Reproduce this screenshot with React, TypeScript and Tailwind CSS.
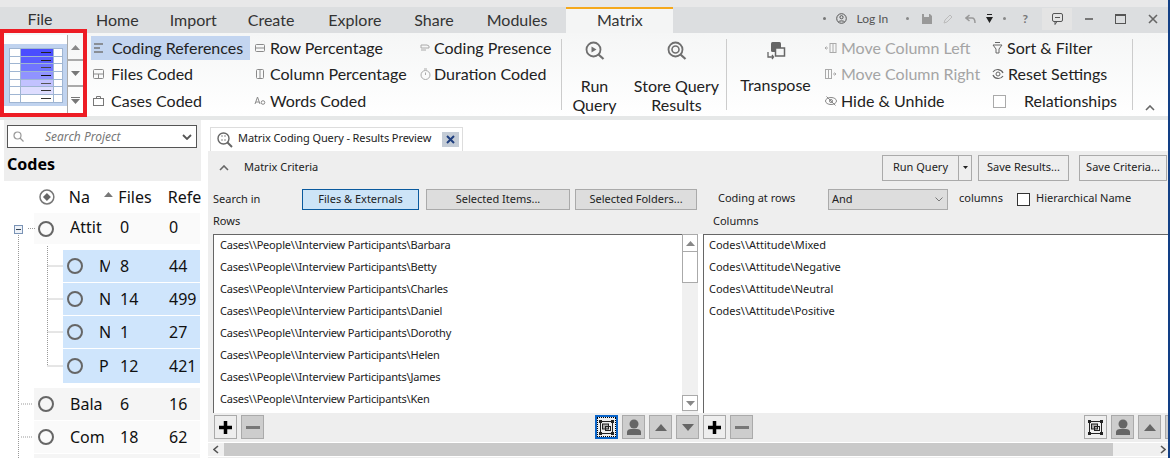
import React from "react";

const S = ({ w = 14, h = 14, children, className = "" }: { w?: number; h?: number; children: React.ReactNode; className?: string }) => (
  <svg width={w} height={h} viewBox={`0 0 ${w} ${h}`} fill="none" className={"shrink-0 " + className}>{children}</svg>
);

const c = "#8a8a8a";
const icons: Record<string, React.ReactNode> = {
  refs: <S><path d="M2 3h9M2 7h6M2 11h9" stroke="#777" strokeWidth="1.6" /></S>,
  files: <S><rect x="1.5" y="2.5" width="10" height="9" rx="1" stroke={c} /><path d="M1.5 7h10M6.5 7v4.5" stroke={c} /></S>,
  cases: <S><rect x="1.5" y="4.5" width="10" height="7" stroke="#777" /><path d="M4.5 4.5V2.5h4v2" stroke="#777" /></S>,
  row: <S><rect x="1.5" y="3.5" width="9" height="7" rx="1" stroke={c} /><path d="M1.5 7h9" stroke={c} /></S>,
  col: <S><rect x="2.5" y="2.5" width="7" height="9" rx="1" stroke={c} /><path d="M6 2.5v9" stroke={c} /></S>,
  words: <S><path d="M1 10l2.5-7L6 10M2 8h3" stroke={c} /><circle cx="9" cy="8.5" r="1.8" stroke={c} /></S>,
  pres: <S><path d="M2 4h6l2 1v2H2zM2 9h5" stroke="#aaa" /></S>,
  dur: <S><circle cx="6.5" cy="8" r="4.5" stroke="#aaa" /><path d="M5 2h3M6.5 8V5.5" stroke="#aaa" /></S>,
  left: <S><path d="M0 7h3M1.500 5.500L0 7l1.500 1.500" stroke="#aaa" /><rect x="5" y="2.5" width="6" height="9" stroke="#aaa" /><path d="M8 2.500v9" stroke="#aaa" /></S>,
  right: <S><rect x=".5" y="2.5" width="6" height="9" stroke="#aaa" /><path d="M3.500 2.500v9M8 7h3M9.500 5.500L11 7 9.500 8.500" stroke="#aaa" /></S>,
  hide: <S><ellipse cx="6" cy="7" rx="5.500" ry="3.500" stroke="#888" /><circle cx="6" cy="7" r="1.500" stroke="#888" /><path d="M1.500 2.500l9 9" stroke="#888" /></S>,
  filter: <S><path d="M2 4h9L8 8v4H5V8z" stroke="#666" /><path d="M4 1.500h5" stroke="#666" /></S>,
  reset: <S><path d="M2 5a5.500 5 0 0 1 10 1M12 9a5.500 5 0 0 1-10-1" stroke="#666" strokeWidth="1.200" /><circle cx="7" cy="7" r="2" stroke="#666" /></S>,
};

const Item = ({ icon, label, gap = "w-[20px]", cls = "text-[#222]", bg = "" }: { icon: string; label: string; gap?: string; cls?: string; bg?: string }) => (
  <div className={`flex h-[26px] items-center whitespace-nowrap ${cls}`}>
    <div className={`flex h-[24px] w-full items-center ${bg}`}>
      <span className={`${gap} flex justify-start pl-[1px]`}>{icons[icon]}</span>
      <span>{label}</span>
    </div>
  </div>
);

const GalleryRow = ({ color, line }: { color: string; line: string }) => (
  <div className="flex h-[7.700px] border-b border-[#9fb5d2]">
    <div className="w-[11px] border-r border-[#9fb5d2] bg-white" />
    <div className={`w-[32px] flex items-center justify-end pr-[2px] ${color}`}>
      <div className={`h-[1px] w-[10px] ${line}`} />
    </div>
    <div className="flex-1 border-l border-[#9fb5d2] bg-white" />
  </div>
);

const Lens = ({ inner }: { inner: React.ReactNode }) => (
  <svg width="20" height="20" viewBox="0 0 20 20" fill="none" className="block">
    <circle cx="8.500" cy="8.500" r="7" stroke="#6f6f6f" strokeWidth="1.800" />
    <path d="M13.500 13.500l5 4.500" stroke="#6f6f6f" strokeWidth="2.200" />
    {inner}
  </svg>
);

const Circle = () => <div className="h-[16px] w-[16px] shrink-0 rounded-full border-2 border-[#666]" />;

const ParentRow = ({ name, files, refs, bg }: { name: string; files: string; refs: string; bg: string }) => (
  <div className={`ml-[30px] flex h-[32px] w-[166px] items-center ${bg}`}>
    <div className="ml-[4px]"><Circle /></div>
    <div className="ml-[16px] w-[50px] overflow-hidden">{name}</div>
    <div className="w-[49px]">{files}</div>
    <div>{refs}</div>
  </div>
);

const ChildRow = ({ name, files, refs, h = "h-[32px]" }: { name: string; files: string; refs: string; h?: string }) => (
  <div className={`ml-[59px] flex w-[137px] items-center bg-[#cfe5fc] ${h}`}>
    <div className="ml-[4px]"><Circle /></div>
    <div className="ml-[16px] mr-[10px] w-[11px] overflow-hidden">{name}</div>
    <div className="w-[49px]">{files}</div>
    <div>{refs}</div>
  </div>
);

const TB = ({ children, light = false, focus = false }: { children: React.ReactNode; light?: boolean; focus?: boolean }) => (
  <div className={`flex h-[24px] w-[23px] shrink-0 items-center justify-center border ${focus ? "border-[#0a64c8] border-2 outline-1 outline-dotted outline-offset-[-3px] outline-black" : "border-[#aaa]"} ${light ? "bg-[#eee]" : "bg-[#cdcdcd]"}`}>
    {children}
  </div>
);
const Plus = () => <svg width="15" height="15" viewBox="0 0 15 15"><path d="M7.500 1v13M1 7.500h13" stroke="#000" strokeWidth="3.500" /></svg>;
const Minus = () => <div className="h-[3px] w-[14px] bg-[#777]" />;
const Person = () => <svg width="16" height="17" viewBox="0 0 16 17" fill="#666"><circle cx="8" cy="5" r="4.500" /><path d="M1 16v-3c0-2 2-3 4-3h6c2 0 4 1 4 3v3z" /></svg>;
const Tri = ({ down = false }: { down?: boolean }) => <svg width="12" height="7" viewBox="0 0 12 7" fill="#666"><path d={down ? "M0 0h12L6 7z" : "M6 0l6 7H0z"} /></svg>;
const Shape = () => (
  <svg width="15" height="15" viewBox="0 0 15 15" fill="none" stroke="#222">
    <rect x="1.500" y="1.500" width="12" height="12" />
    <rect x="0" y="0" width="3" height="3" fill="#222" stroke="none" />
    <rect x="12" y="0" width="3" height="3" fill="#222" stroke="none" />
    <rect x="0" y="12" width="3" height="3" fill="#222" stroke="none" />
    <rect x="12" y="12" width="3" height="3" fill="#222" stroke="none" />
    <rect x="3.500" y="4" width="6" height="5" fill="#aaa" />
    <rect x="6.500" y="6.500" width="5" height="4" />
  </svg>
);

const rows = ["Barbara", "Betty", "Charles", "Daniel", "Dorothy", "Helen", "James", "Ken"];
const cols = ["Mixed", "Negative", "Neutral", "Positive"];
const Btn = ({ children, cls }: { children: React.ReactNode; cls: string }) => (
  <div className={`flex items-center justify-center border ${cls}`}>{children}</div>
);

export default function App() {
  return (
    <div className="relative flex h-[458px] w-[1170px] flex-col overflow-hidden border-r-2 border-[#123f85] bg-white font-['Noto_Sans',sans-serif]">
      {/* Title + tabs */}
      <div className="flex h-[33px] shrink-0 border-t-[7px] border-[#e8e8e9] bg-[#dcdee0] font-['Lato',sans-serif] text-[16px] text-[#333]">
        <div className="flex w-[80px] items-center justify-center pb-[3px]">File</div>
        {[["Home", "ml-[16px]"], ["Import", "ml-[31px]"], ["Create", "ml-[31px]"], ["Explore", "ml-[34px]"], ["Share", "ml-[33px]"], ["Modules", "ml-[33px]"]].map(([t, m]) => (
          <div key={t} className={`flex items-center ${m}`}>{t}</div>
        ))}
        <div className="ml-[19px] flex w-[107px] items-center justify-center border-t-2 border-[#f5a81c] bg-[#f4f5f5] pb-[2px]">Matrix</div>
        <div className="ml-[150px] flex items-center whitespace-nowrap pb-[3px] text-[12px] text-[#555]">
          <span className="h-[3px] w-[3px] rounded-full bg-[#777]" />
          <svg className="ml-[10px]" width="11" height="11" viewBox="0 0 11 11" fill="none" stroke="#555"><circle cx="5.500" cy="5.500" r="4.800" /><circle cx="5.500" cy="4.200" r="1.600" /><path d="M2.500 9c.5-1.500 5.500-1.500 6 0" /></svg>
          <span className="ml-[9px] w-[33px]">Log In</span>
          <span className="ml-[17px] h-[3px] w-[3px] rounded-full bg-[#888]" />
          <svg className="ml-[13px]" width="10" height="10" viewBox="0 0 10 10" fill="#999"><path d="M0 0h8l2 2v8H0z" /><path d="M2 0h5v3H2z" fill="#dcdee0" /></svg>
          <svg className="ml-[11px]" width="10" height="10" viewBox="0 0 10 10" fill="none" stroke="#bbb"><path d="M1 9l1-3 5-5 2 2-5 5z" /></svg>
          <svg className="ml-[12px]" width="11" height="10" viewBox="0 0 11 10" fill="none" stroke="#999" strokeWidth="1.500"><path d="M4.500 1L1 4l3.500 3M1 4h6c2 0 3 2 3 5" /></svg>
          <svg className="ml-[10px]" width="7" height="9" viewBox="0 0 7 9" fill="#222"><path d="M1 0h5v1H1zM0 3h7L3.500 9z" /></svg>
          <span className="ml-[10px] h-[3px] w-[3px] rounded-full bg-[#888]" />
          <span className="ml-[16px] w-[7px] font-bold text-[#777]">?</span>
          <div className="ml-[13px] flex h-[22px] w-[30px] items-center justify-center bg-[#e4e4e4]">
            <svg width="11" height="12" viewBox="0 0 11 12" fill="none" stroke="#555"><rect x=".5" y=".5" width="10" height="8" rx="1.500" /><path d="M3 8.500v3l2-3M3 4.500h5" /></svg>
          </div>
          <span className="ml-[13px] h-[2px] w-[8px] bg-[#777]" />
          <span className="ml-[22px] h-[10px] w-[11px] border border-t-2 border-[#555]" />
          <svg className="ml-[22px]" width="10" height="10" viewBox="0 0 10 10" stroke="#666" strokeWidth="1.600"><path d="M1 1l8 8M9 1L1 9" /></svg>
        </div>
      </div>

      {/* Ribbon */}
      <div className="flex h-[83px] shrink-0 bg-gradient-to-b from-[#f5f6f6] to-white pt-[2px] font-['Lato',sans-serif] text-[16px]">
        <div className="ml-[4px] flex h-[78px] w-[79px] shrink-0">
          <div className="h-[78px] w-[63px] bg-white pt-[9px]">
            <div className="h-[62px] w-[63px] bg-[#c0d3ef] pl-[5px] pr-[4px] pt-[4px]">
              <div className="border-x border-t border-[#9fb5d2]">
                <GalleryRow color="bg-[#4a4dff]" line="bg-[#222]" />
                <GalleryRow color="bg-[#5a5dff]" line="bg-[#222]" />
                <GalleryRow color="bg-[#7075ff]" line="bg-[#444]" />
                <GalleryRow color="bg-[#9093ff]" line="bg-[#111]" />
                <GalleryRow color="bg-[#c2c2ff]" line="bg-[#555]" />
                <GalleryRow color="bg-[#deddff]" line="bg-[#333]" />
                <GalleryRow color="bg-white" line="bg-[#333]" />
              </div>
            </div>
          </div>
          <div className="flex w-[16px] flex-col border-l border-[#aaa]">
            <div className="flex h-[26px] items-center justify-center border-b-2 border-[#aaa]"><svg width="9" height="5" viewBox="0 0 9 5" fill="#888"><path d="M4.500 0L9 5H0z" /></svg></div>
            <div className="flex h-[26px] items-center justify-center border-b-2 border-[#aaa]"><svg width="9" height="5" viewBox="0 0 9 5" fill="#777"><path d="M0 0h9L4.500 5z" /></svg></div>
            <div className="flex flex-1 flex-col items-center justify-center gap-[1px]"><div className="h-[1px] w-[9px] bg-[#777]" /><svg width="9" height="5" viewBox="0 0 9 5" fill="#777"><path d="M0 0h9L4.500 5z" /></svg></div>
          </div>
        </div>

        <div className="ml-[8px] w-[159px] shrink-0">
          <Item icon="refs" label="Coding References" gap="w-[21px]" bg="bg-[#c3d5f0]" />
          <Item icon="files" label="Files Coded" />
          <div className="pt-[1px]"><Item icon="cases" label="Cases Coded" /></div>
        </div>
        <div className="ml-[3px] w-[165px] shrink-0">
          <Item icon="row" label="Row Percentage" gap="w-[17px]" />
          <Item icon="col" label="Column Percentage" gap="w-[17px]" />
          <div className="pt-[1px]"><Item icon="words" label="Words Coded" gap="w-[17px]" /></div>
        </div>
        <div className="w-[143px] shrink-0">
          <Item icon="pres" label="Coding Presence" gap="w-[16px]" />
          <Item icon="dur" label="Duration Coded" gap="w-[16px]" />
        </div>
        <div className="mt-[4px] h-[71px] w-[1px] shrink-0 bg-[#ccc]" />
        <div className="flex w-[65px] shrink-0 flex-col items-center text-[#222]">
          <div className="mt-[6px] ml-[1px] h-[26px]"><Lens inner={<path d="M6.500 5.500l5 3-5 3z" fill="#6f6f6f" />} /></div>
          <div className="mt-[9px] text-center leading-[19px]">Run<br />Query</div>
        </div>
        <div className="flex w-[99px] shrink-0 flex-col items-center text-[#222]">
          <div className="mt-[6px] h-[26px]"><Lens inner={<circle cx="8.500" cy="8.500" r="3.500" stroke="#6f6f6f" strokeWidth="1.600" />} /></div>
          <div className="mt-[9px] whitespace-nowrap text-center leading-[19px]">Store Query<br />Results</div>
        </div>
        <div className="mt-[4px] h-[71px] w-[1px] shrink-0 bg-[#ccc]" />
        <div className="flex w-[97px] shrink-0 flex-col items-center text-[#222]">
          <div className="mt-[6px] h-[26px]">
            <svg width="20" height="20" viewBox="0 0 20 20" fill="none" className="block"><rect x="5" y="1" width="10" height="10" rx="1.500" fill="#666" /><rect x="9.500" y="7" width="9" height="8" fill="#f5f6f6" stroke="#666" strokeWidth="1.500" /><path d="M2 11v5h5M6 14l1.500 2L6 18" stroke="#666" strokeWidth="1.300" /></svg>
          </div>
          <div className="mt-[8px] leading-[19px]">Transpose</div>
        </div>
        <div className="w-[166px] shrink-0">
          <Item icon="left" label="Move Column Left" gap="w-[17px]" cls="text-[#a5a5a5]" />
          <Item icon="right" label="Move Column Right" gap="w-[17px]" cls="text-[#a5a5a5]" />
          <div className="pt-[1px]"><Item icon="hide" label="Hide &amp; Unhide" gap="w-[17px]" /></div>
        </div>
        <div className="w-[142px] shrink-0">
          <Item icon="filter" label="Sort &amp; Filter" gap="w-[17px]" />
          <Item icon="reset" label="Reset Settings" gap="w-[18px]" />
          <div className="flex h-[27px] items-center pt-[1px] text-[#222]">
            <div className="ml-[3px] h-[13px] w-[13px] border border-[#aaa] bg-white" />
            <span className="ml-[18px]">Relationships</span>
          </div>
        </div>
        <div className="mt-[4px] h-[71px] w-[1px] shrink-0 bg-[#ccc]" />
        <div className="ml-[12px] flex h-[77px] items-end pb-[1px]">
          <svg width="10" height="6" viewBox="0 0 10 6" fill="none" stroke="#666" strokeWidth="1.600"><path d="M1 5l4-4 4 4" /></svg>
        </div>
      </div>
      <div className="h-[4px] shrink-0 bg-[#e6e8e8]" />

      {/* Body */}
      <div className="flex min-h-0 flex-1">
        {/* Navigation */}
        <div className="ml-[4px] w-[197px] shrink-0 overflow-hidden text-[16px] text-[#111]">
          <div className="h-[61px] bg-[#eee] pl-[3px] pt-[5px]">
            <div className="flex h-[23px] w-[190px] items-center border border-[#555] bg-white pl-[5px] pr-[4px]">
              <svg width="11" height="11" viewBox="0 0 11 11" fill="none" stroke="#999" strokeWidth="1.200"><circle cx="4.500" cy="4.500" r="3.500" /><path d="M7 7l3.500 3.500" /></svg>
              <span className="ml-[21px] flex-1 text-[12px] italic text-[#777]">Search Project</span>
              <svg width="10" height="6" viewBox="0 0 10 6" fill="none" stroke="#555" strokeWidth="1.800"><path d="M1 1l4 4 4-4" /></svg>
            </div>
            <div className="mt-[5px] pl-[0px] text-[16px] font-bold leading-[22px] text-black">Codes</div>
          </div>
          <div className="relative">
            <svg className="absolute left-0 top-0" width="60" height="280" viewBox="0 0 60 280" fill="none" stroke="#999" strokeDasharray="1 1">
              <path d="M14.500 52V280M24 47.500h7M43.500 65V185H59M43.500 85H59M43.500 118H59M43.500 151H59M17 223h12M17 256h12" />
            </svg>
            <div className="flex h-[32px] items-center">
              <svg className="ml-[35px]" width="16" height="16" viewBox="0 0 16 16" fill="none"><circle cx="8" cy="8" r="7" stroke="#777" strokeWidth="1.500" /><path d="M8 4L12 8 8 12 4 8z" fill="#666" /></svg>
              <span className="ml-[14px] w-[36px]">Na</span>
              <svg width="9" height="5" viewBox="0 0 9 5" fill="#777" className="mb-[6px]"><path d="M4.500 0L9 5H0z" /></svg>
              <span className="ml-[5px] w-[50px]">Files</span>
              <span className="overflow-hidden">Refe</span>
            </div>
            <div className="absolute left-[10px] top-[44px] flex h-[9px] w-[9px] items-center justify-center border border-[#7a93b5] bg-[#eef2f8]"><div className="h-[1px] w-[5px] bg-[#345]" /></div>
            <div className="-mb-[1px] pb-[0px]">
              <div className="ml-[30px] flex h-[31px] w-[166px] items-center bg-[#fafafa]">
                <div className="ml-[4px]"><Circle /></div>
                <div className="mb-[3px] ml-[16px] w-[50px] overflow-hidden">Attit</div>
                <div className="mb-[3px] w-[49px]">0</div>
                <div className="mb-[3px]">0</div>
              </div>
            </div>
            <div className="h-[7px]" />
            <div className="flex flex-col gap-[1px]">
              <ChildRow name="M" files="8" refs="44" />
              <ChildRow name="N" files="14" refs="499" />
              <ChildRow name="N" files="1" refs="27" />
              <ChildRow name="P" files="12" refs="421" h="h-[34px]" />
            </div>
            <div className="h-[5px]" />
            <div className="flex flex-col gap-[1px]">
              <ParentRow name="Bala" files="6" refs="16" bg="bg-[#f5f5f5]" />
              <ParentRow name="Com" files="18" refs="62" bg="bg-[#fafafa]" />
              <ParentRow name="" files="" refs="" bg="bg-[#f5f5f5]" />
            </div>
          </div>
        </div>

        {/* Query pane */}
        <div className="ml-[7px] flex min-w-0 flex-1 flex-col text-[11px] text-[#222]">
          <div className="flex h-[31px] shrink-0 items-end bg-white pl-[2px]">
            <div className="flex h-[24px] w-[253px] items-center border-x border-t border-[#ddd] bg-white">
              <svg className="ml-[6px]" width="16" height="16" viewBox="0 0 16 16" fill="none" stroke="#666"><circle cx="6.500" cy="6.500" r="5.500" strokeWidth="1.400" /><path d="M10.500 10.500L15 15" strokeWidth="2" /><path d="M4.500 4h1M7.500 4h1M4.500 8h1M7.500 8h1" strokeWidth="1.500" /></svg>
              <span className="ml-[5px] mb-[2px] w-[204px] whitespace-nowrap tracking-[-0.1px]">Matrix Coding Query - Results Preview</span>
              <div className="flex h-[15px] w-[17px] items-center justify-center bg-[#c4ccd6]">
                <svg width="9" height="9" viewBox="0 0 9 9" stroke="#1f3f7f" strokeWidth="2"><path d="M1 1l7 7M8 1L1 8" /></svg>
              </div>
            </div>
          </div>
          <div className="flex min-h-0 flex-1 flex-col bg-[#eee]">
            <div className="flex h-[37px] shrink-0 items-center pb-[4px] pl-[11px]">
              <svg width="10" height="6" viewBox="0 0 10 6" fill="none" stroke="#666" strokeWidth="1.600"><path d="M1 5l4-4 4 4" /></svg>
              <span className="ml-[15px]">Matrix Criteria</span>
              <div className="ml-auto flex items-center pr-[1px]">
                <Btn cls="h-[26px] w-[77px] border-[#aaa] bg-[#eee]">Run Query</Btn>
                <Btn cls="h-[26px] w-[13px] border-[#aaa] border-l-0 bg-[#eee]"><svg width="5" height="3" viewBox="0 0 5 3" fill="#222"><path d="M0 0h5L2.500 3z" /></svg></Btn>
                <Btn cls="ml-[6px] h-[26px] w-[91px] border-[#aaa] bg-[#eee]">Save Results...</Btn>
                <Btn cls="ml-[10px] h-[26px] w-[88px] border-[#aaa] bg-[#eee]">Save Criteria...</Btn>
              </div>
            </div>
            <div className="flex h-[22px] shrink-0 items-center pl-[5px]">
              <span className="w-[89px]">Search in</span>
              <Btn cls="h-[21px] w-[117px] border-[#0a5a9e] bg-[#cce4f7]">Files &amp; Externals</Btn>
              <Btn cls="ml-[7px] h-[21px] w-[144px] border-[#aaa] bg-[#ddd]">Selected Items...</Btn>
              <Btn cls="ml-[5px] h-[21px] w-[122px] border-[#aaa] bg-[#ddd]">Selected Folders...</Btn>
              <span className="ml-[21px] w-[110px] pb-[2px]">Coding at rows</span>
              <div className="flex h-[21px] w-[120px] items-center border border-[#aaa] bg-[#ddd] pl-[3px] pr-[4px]">
                <span className="flex-1">And</span>
                <svg width="8" height="5" viewBox="0 0 8 5" fill="none" stroke="#777"><path d="M.5.5L4 4 7.500.5" /></svg>
              </div>
              <span className="ml-[11px] w-[58px] pb-[2px]">columns</span>
              <div className="h-[13px] w-[13px] border border-[#333] bg-white" />
              <span className="ml-[6px] pb-[1px]">Hierarchical Name</span>
            </div>
            <div className="flex h-[24px] shrink-0 items-center pb-[2px] pl-[5px]">
              <span className="w-[500px]">Rows</span>
              <span>Columns</span>
            </div>
            <div className="flex h-[179px] shrink-0 pl-[5px]">
              <div className="flex w-[490px] shrink-0 bg-white">
                <div className="flex w-[469px] flex-col border-l border-t border-[#666] pl-[6px]">
                  {rows.map((r) => (
                    <div key={r} className="flex h-[22px] items-center whitespace-nowrap pb-[2px] tracking-[-0.2px]">{`Cases\\\\People\\\\Interview Participants\\${r}`}</div>
                  ))}
                </div>
                <div className="flex w-[16px] flex-col bg-[#f0f0f0]">
                  <div className="flex h-[18px] items-center justify-center border border-[#aaa] bg-white"><svg width="9" height="5" viewBox="0 0 9 5" fill="#888"><path d="M4.500 0L9 5H0z" /></svg></div>
                  <div className="h-[31px] border border-t-0 border-[#aaa] bg-white" />
                  <div className="flex-1" />
                  <div className="mb-[2px] flex h-[16px] items-center justify-center border border-[#aaa] bg-white"><svg width="9" height="5" viewBox="0 0 9 5" fill="#888"><path d="M0 0h9L4.500 5z" /></svg></div>
                </div>
              </div>
              <div className="flex flex-1 flex-col border-l border-t border-[#666] bg-white pl-[5px]">
                {cols.map((r) => (
                  <div key={r} className="flex h-[22px] items-center whitespace-nowrap pb-[2px]">{`Codes\\\\Attitude\\${r}`}</div>
                ))}
              </div>
            </div>
            <div className="flex h-[28px] shrink-0 items-start pl-[6px] pt-[2px]">
              <TB light><Plus /></TB>
              <div className="ml-[4px]"><TB><Minus /></TB></div>
              <div className="ml-[331px]"><TB light focus><Shape /></TB></div>
              <div className="ml-[4px]"><TB><Person /></TB></div>
              <div className="ml-[4px]"><TB><Tri /></TB></div>
              <div className="ml-[4px]"><TB><Tri down /></TB></div>
              <div className="ml-[4px]"><TB light><Plus /></TB></div>
              <div className="ml-[4px]"><TB><Minus /></TB></div>
              <div className="ml-[331px]"><TB light><Shape /></TB></div>
              <div className="ml-[4px]"><TB><Person /></TB></div>
              <div className="ml-[4px]"><TB><Tri /></TB></div>
              <div className="ml-[4px]"><TB><Tri down /></TB></div>
            </div>
            <div className="mt-[1px] flex h-[15px] shrink-0 border-y border-white bg-[#f0f0f0]">
              <div className="flex w-[16px] items-center justify-center"><svg width="6" height="9" viewBox="0 0 6 9" fill="none" stroke="#555" strokeWidth="1.600"><path d="M5 1L1 4.500 5 8" /></svg></div>
              <div className="w-[889px] bg-[#c9c9c9]" />
              <div className="flex flex-1 items-center justify-end pr-[2px]"><svg width="6" height="9" viewBox="0 0 6 9" fill="none" stroke="#555" strokeWidth="1.600"><path d="M1 1l4 3.500L1 8" /></svg></div>
            </div>
          </div>
        </div>
      </div>

      {/* Red annotation */}
      <div className="pointer-events-none absolute left-0 top-[29px] h-[88px] w-[87px] border-4 border-[#ed1c24]" />
    </div>
  );
}
